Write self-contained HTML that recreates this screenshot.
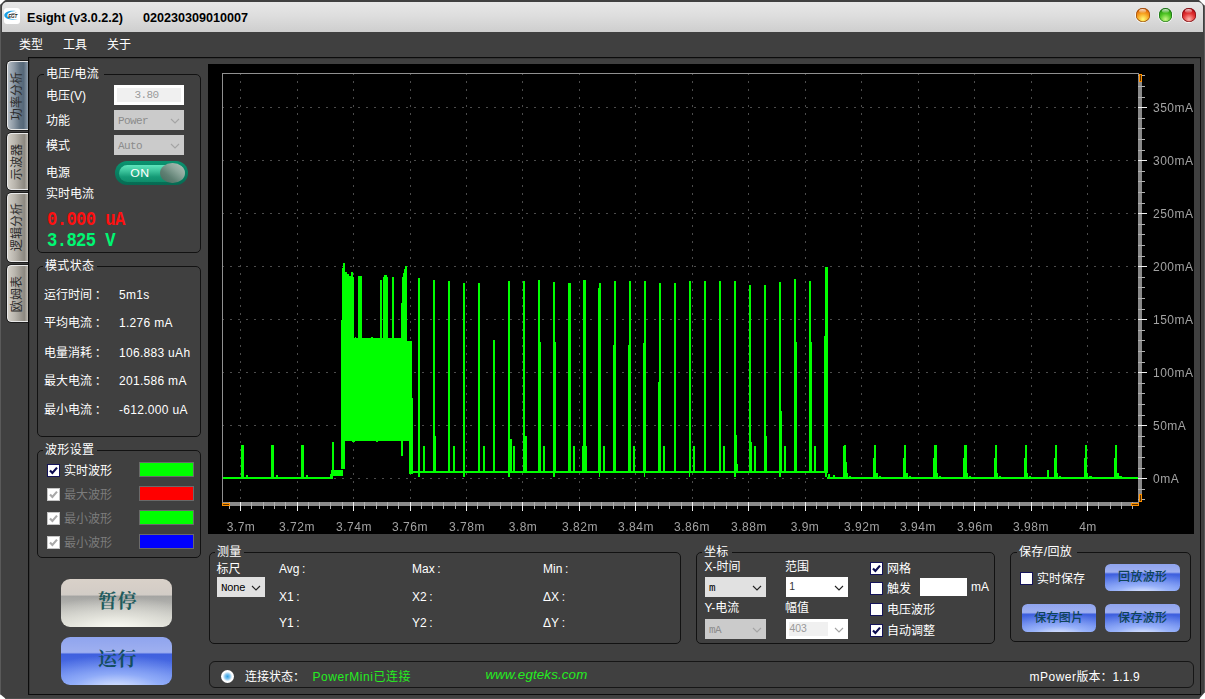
<!DOCTYPE html>
<html lang="zh"><head><meta charset="utf-8"><title>Esight</title>
<style>
html,body{margin:0;padding:0;background:#fff;}
body{width:1205px;height:699px;position:relative;overflow:hidden;font-family:"Liberation Sans","Noto Sans CJK SC",sans-serif;}
#win{position:absolute;left:0;top:0;width:1205px;height:699px;background:#404040;border-radius:6px 6px 0 0;overflow:hidden;clip-path:polygon(0 5px,5px 0,1199px 0,1205px 6px,1205px 692px,1199px 699px,6px 699px,0 694px);}
.a{position:absolute;}
.t{white-space:nowrap;}
</style></head><body><div id="win">
<div class="a " style="left:2px;top:2px;width:1201px;height:30px;background:linear-gradient(#e7e7e7,#dedede 45%,#cecece);border-radius:5px 5px 0 0;"></div>
<svg class="a" style="left:4px;top:8px" width="16" height="16" viewBox="0 0 16 16">
<rect width="16" height="16" rx="3" fill="#fff"/>
<path d="M11.8 3 C6 2 0.3 4 0.3 7.3 C0.3 10.9 7 12.7 15.2 11 C8 11.9 3.3 10.2 3.3 7.5 C3.3 4.9 7 3.3 11.8 3Z" fill="#1aa0e6"/>
<path d="M5.5 6.3 C8 5.6 10.5 5.6 12.8 4 C11.5 5.9 8.6 6.4 5.5 6.3Z" fill="#222"/>
<text x="4.2" y="10.2" font-family="Liberation Sans,sans-serif" font-size="4.6" font-weight="bold" font-style="italic" fill="#222" textLength="9">EGT</text>
</svg>
<div class="a t" style="left:27px;top:9.3px;height:18px;line-height:18px;font-size:13.2px;color:#000;font-weight:bold;transform:scaleX(0.955);transform-origin:0 50%;">Esight (v3.0.2.2)</div>
<div class="a t" style="left:143px;top:9.3px;height:18px;line-height:18px;font-size:13.2px;color:#000;font-weight:bold;transform:scaleX(0.955);transform-origin:0 50%;">020230309010007</div>
<div class="a " style="left:1135.4px;top:7.8999999999999995px;width:15.0px;height:15.0px;border-radius:50%;background:rgba(255,255,255,.75);"></div>
<div class="a " style="left:1136.2px;top:8.2px;width:13.4px;height:13.4px;border-radius:50%;background:radial-gradient(circle at 50% 80%,#fffa72 0%,#f6a020 45%,#e26c0a 72%,#8c4208 98%);box-shadow:inset 0 0 0 0.6px #8c4208;"></div>
<div class="a " style="left:1139.3000000000002px;top:9.3px;width:7.2px;height:4.2px;border-radius:50%;background:linear-gradient(rgba(255,255,255,.8),rgba(255,255,255,.08));"></div>
<div class="a " style="left:1158.3px;top:7.8999999999999995px;width:15.0px;height:15.0px;border-radius:50%;background:rgba(255,255,255,.75);"></div>
<div class="a " style="left:1159.1px;top:8.2px;width:13.4px;height:13.4px;border-radius:50%;background:radial-gradient(circle at 50% 80%,#c6f884 0%,#4cc222 45%,#2b9c12 72%,#0d5f10 98%);box-shadow:inset 0 0 0 0.6px #0d5f10;"></div>
<div class="a " style="left:1162.2px;top:9.3px;width:7.2px;height:4.2px;border-radius:50%;background:linear-gradient(rgba(255,255,255,.8),rgba(255,255,255,.08));"></div>
<div class="a " style="left:1181.4px;top:7.8999999999999995px;width:15.0px;height:15.0px;border-radius:50%;background:rgba(255,255,255,.75);"></div>
<div class="a " style="left:1182.2px;top:8.2px;width:13.4px;height:13.4px;border-radius:50%;background:radial-gradient(circle at 50% 80%,#ffb4ac 0%,#e23434 45%,#c0121a 72%,#6e0a10 98%);box-shadow:inset 0 0 0 0.6px #6e0a10;"></div>
<div class="a " style="left:1185.3000000000002px;top:9.3px;width:7.2px;height:4.2px;border-radius:50%;background:linear-gradient(rgba(255,255,255,.8),rgba(255,255,255,.08));"></div>
<div class="a " style="left:0px;top:0px;width:1px;height:699px;background:#5a5a5a;"></div>
<div class="a " style="left:1204px;top:0px;width:1px;height:699px;background:#5a5a5a;"></div>
<div class="a " style="left:0px;top:698px;width:1205px;height:1px;background:#4e4e4e;"></div>
<div class="a t" style="left:19px;top:36.5px;height:16px;line-height:16px;font-size:12px;color:#fff;">类型</div>
<div class="a t" style="left:63px;top:36.5px;height:16px;line-height:16px;font-size:12px;color:#fff;">工具</div>
<div class="a t" style="left:107px;top:36.5px;height:16px;line-height:16px;font-size:12px;color:#fff;">关于</div>
<div class="a " style="left:28px;top:57px;width:1173px;height:638px;border:1px solid #0c0c0c;box-sizing:border-box;box-shadow:inset 1px 1px 0 #353535;"></div>
<div class="a " style="left:7px;top:61px;width:21px;height:69px;background:linear-gradient(90deg,#b4bcc4 0%,#8d99a5 30%,#5f7080 60%,#566879 78%,#8c9aa8 100%);border:1px solid #e8e8e8;border-right:none;border-radius:4.5px 0 0 4.5px;box-sizing:border-box;box-shadow:-1px 0 0 #1c1c1c,0 -1px 0 #1c1c1c,0 1px 0 #1c1c1c;"></div>
<div class="a t" style="left:-23.1px;top:87.5px;width:80px;height:16px;line-height:16px;text-align:center;font-size:12px;color:#2c2c2c;transform:rotate(-90deg);letter-spacing:0.1px;">功率分析</div>
<div class="a " style="left:7px;top:133px;width:21px;height:57px;background:linear-gradient(90deg,#d2cec6 0%,#b9b5ad 35%,#9b978f 65%,#8d8981 82%,#bdb9b1 100%);border:1px solid #e8e8e8;border-right:none;border-radius:4.5px 0 0 4.5px;box-sizing:border-box;box-shadow:-1px 0 0 #1c1c1c,0 -1px 0 #1c1c1c,0 1px 0 #1c1c1c;"></div>
<div class="a t" style="left:-23.1px;top:153.5px;width:80px;height:16px;line-height:16px;text-align:center;font-size:12px;color:#2c2c2c;transform:rotate(-90deg);letter-spacing:0.1px;">示波器</div>
<div class="a " style="left:7px;top:193px;width:21px;height:68.5px;background:linear-gradient(90deg,#d2cec6 0%,#b9b5ad 35%,#9b978f 65%,#8d8981 82%,#bdb9b1 100%);border:1px solid #e8e8e8;border-right:none;border-radius:4.5px 0 0 4.5px;box-sizing:border-box;box-shadow:-1px 0 0 #1c1c1c,0 -1px 0 #1c1c1c,0 1px 0 #1c1c1c;"></div>
<div class="a t" style="left:-23.1px;top:219.25px;width:80px;height:16px;line-height:16px;text-align:center;font-size:12px;color:#2c2c2c;transform:rotate(-90deg);letter-spacing:0.1px;">逻辑分析</div>
<div class="a " style="left:7px;top:265px;width:21px;height:57px;background:linear-gradient(90deg,#d2cec6 0%,#b9b5ad 35%,#9b978f 65%,#8d8981 82%,#bdb9b1 100%);border:1px solid #e8e8e8;border-right:none;border-radius:4.5px 0 0 4.5px;box-sizing:border-box;box-shadow:-1px 0 0 #1c1c1c,0 -1px 0 #1c1c1c,0 1px 0 #1c1c1c;"></div>
<div class="a t" style="left:-23.1px;top:285.5px;width:80px;height:16px;line-height:16px;text-align:center;font-size:12px;color:#2c2c2c;transform:rotate(-90deg);letter-spacing:0.1px;">欧姆表</div>
<div class="a " style="left:37px;top:74px;width:164px;height:179px;border:1px solid #121212;border-radius:5px;box-sizing:border-box;"></div>
<div class="a " style="left:44px;top:72px;width:60px;height:5px;background:#404040;"></div>
<div class="a t" style="left:46px;top:66.4px;height:16px;line-height:16px;font-size:12px;color:#fff;letter-spacing:0.35px;">电压/电流</div>
<div class="a t" style="left:46px;top:88.3px;height:16px;line-height:16px;font-size:12px;color:#fff;">电压(V)</div>
<div class="a t" style="left:46px;top:112.8px;height:16px;line-height:16px;font-size:12px;color:#fff;">功能</div>
<div class="a t" style="left:46px;top:138.0px;height:16px;line-height:16px;font-size:12px;color:#fff;">模式</div>
<div class="a t" style="left:46px;top:165.0px;height:16px;line-height:16px;font-size:12px;color:#fff;">电源</div>
<div class="a t" style="left:46px;top:186.3px;height:16px;line-height:16px;font-size:12px;color:#fff;">实时电流</div>
<div class="a " style="left:114px;top:85px;width:70px;height:20px;background:#f0f0f0;border:3px solid #fff;box-sizing:border-box;"></div>
<div class="a t" style="left:116.5px;top:87.8px;width:60px;text-align:center;height:14px;line-height:14px;font-size:11px;color:#9a9a9a;font-family:'Liberation Mono','Noto Sans CJK SC',monospace;letter-spacing:-0.6px;">3.80</div>
<div class="a " style="left:114px;top:110px;width:70px;height:20px;background:#cbcbcb;"></div>
<div class="a t" style="left:118px;top:113.9px;height:14px;line-height:14px;font-size:11px;color:#8c8c8c;font-family:'Liberation Mono','Noto Sans CJK SC',monospace;letter-spacing:-0.6px;">Power</div>
<svg class="a" style="left:169.5px;top:117.5px" width="10" height="6" viewBox="0 0 10 6"><path d="M1 1 L5.0 5 L9 1" fill="none" stroke="#a4a4a4" stroke-width="1.1"/></svg>
<div class="a " style="left:114px;top:135px;width:70px;height:20px;background:#cbcbcb;"></div>
<div class="a t" style="left:118px;top:138.9px;height:14px;line-height:14px;font-size:11px;color:#8c8c8c;font-family:'Liberation Mono','Noto Sans CJK SC',monospace;letter-spacing:-0.6px;">Auto</div>
<svg class="a" style="left:169.5px;top:142.5px" width="10" height="6" viewBox="0 0 10 6"><path d="M1 1 L5.0 5 L9 1" fill="none" stroke="#a4a4a4" stroke-width="1.1"/></svg>
<div class="a " style="left:115px;top:161px;width:73px;height:24px;border-radius:12px;background:linear-gradient(#0a9470,#087a5e 60%,#066a52);"></div>
<div class="a " style="left:118.5px;top:164.5px;width:66.5px;height:17.5px;border-radius:9px;background:linear-gradient(#5fe4bc 0%,#3cc49c 35%,#159a76 70%,#0e8c6a 100%);"></div>
<div class="a t" style="left:119.80000000000001px;top:167.3px;width:40px;text-align:center;height:14px;line-height:14px;font-size:10.2px;color:#fff;letter-spacing:0.4px;transform:scaleX(1.2);">ON</div>
<div class="a " style="left:160.2px;top:162.7px;width:24.8px;height:20.4px;border-radius:50%;background:linear-gradient(to bottom left,#b6c6be 0%,#8ea79c 35%,#5f8073 65%,#456659 100%);"></div>
<div class="a t" style="left:46.9px;top:209.3px;height:22px;line-height:22px;font-size:19.5px;color:#ff1010;font-family:'Liberation Mono','Noto Sans CJK SC',monospace;font-weight:bold;letter-spacing:-0.68px;transform:scaleX(0.88);transform-origin:0 50%;">0.000 uA</div>
<div class="a t" style="left:46.9px;top:230.1px;height:22px;line-height:22px;font-size:19.5px;color:#00f673;font-family:'Liberation Mono','Noto Sans CJK SC',monospace;font-weight:bold;letter-spacing:-0.68px;transform:scaleX(0.88);transform-origin:0 50%;">3.825 V</div>
<div class="a " style="left:37px;top:266px;width:164px;height:171px;border:1px solid #121212;border-radius:5px;box-sizing:border-box;"></div>
<div class="a " style="left:43px;top:264px;width:54px;height:5px;background:#404040;"></div>
<div class="a t" style="left:45px;top:258.4px;height:16px;line-height:16px;font-size:12px;color:#fff;letter-spacing:0.35px;">模式状态</div>
<div class="a t" style="left:44px;top:287.0px;height:16px;line-height:16px;font-size:12px;color:#fff;">运行时间<span style="margin-left:2.7px">：</span></div>
<div class="a t" style="left:119px;top:287.0px;height:16px;line-height:16px;font-size:12px;color:#fff;letter-spacing:0.3px;">5m1s</div>
<div class="a t" style="left:44px;top:315.4px;height:16px;line-height:16px;font-size:12px;color:#fff;">平均电流<span style="margin-left:2.7px">：</span></div>
<div class="a t" style="left:119px;top:315.4px;height:16px;line-height:16px;font-size:12px;color:#fff;letter-spacing:0.3px;">1.276 mA</div>
<div class="a t" style="left:44px;top:344.5px;height:16px;line-height:16px;font-size:12px;color:#fff;">电量消耗<span style="margin-left:2.7px">：</span></div>
<div class="a t" style="left:119px;top:344.5px;height:16px;line-height:16px;font-size:12px;color:#fff;letter-spacing:0.3px;">106.883 uAh</div>
<div class="a t" style="left:44px;top:373.4px;height:16px;line-height:16px;font-size:12px;color:#fff;">最大电流<span style="margin-left:2.7px">：</span></div>
<div class="a t" style="left:119px;top:373.4px;height:16px;line-height:16px;font-size:12px;color:#fff;letter-spacing:0.3px;">201.586 mA</div>
<div class="a t" style="left:44px;top:402.0px;height:16px;line-height:16px;font-size:12px;color:#fff;">最小电流<span style="margin-left:2.7px">：</span></div>
<div class="a t" style="left:119px;top:402.0px;height:16px;line-height:16px;font-size:12px;color:#fff;letter-spacing:0.3px;">-612.000 uA</div>
<div class="a " style="left:37px;top:450px;width:164px;height:108px;border:1px solid #121212;border-radius:5px;box-sizing:border-box;"></div>
<div class="a " style="left:43px;top:448px;width:54px;height:5px;background:#404040;"></div>
<div class="a t" style="left:45px;top:442.4px;height:16px;line-height:16px;font-size:12px;color:#fff;letter-spacing:0.35px;">波形设置</div>
<div class="a " style="left:47px;top:464px;width:13px;height:13px;background:#fff;border:1px solid #14145a;box-sizing:border-box;"></div>
<svg class="a" style="left:47px;top:464px" width="13" height="13" viewBox="0 0 13 13"><path d="M3 6.4 L5.4 9 L10 3.6" fill="none" stroke="#0a0a50" stroke-width="2.15"/></svg>
<div class="a t" style="left:64px;top:462.5px;height:16px;line-height:16px;font-size:12px;color:#fff;">实时波形</div>
<div class="a " style="left:139px;top:462px;width:55px;height:15px;background:#00ff00;border:1px solid #6a6a6a;box-sizing:border-box;"></div>
<div class="a " style="left:47px;top:488px;width:13px;height:13px;background:#fff;border:1px solid #c4c4c4;box-sizing:border-box;"></div>
<svg class="a" style="left:47px;top:488px" width="13" height="13" viewBox="0 0 13 13"><path d="M3 6.4 L5.4 9 L10 3.6" fill="none" stroke="#a8a8a8" stroke-width="2.15"/></svg>
<div class="a t" style="left:64px;top:486.5px;height:16px;line-height:16px;font-size:12px;color:#7c7c7c;">最大波形</div>
<div class="a " style="left:139px;top:486px;width:55px;height:15px;background:#ff0000;border:1px solid #6a6a6a;box-sizing:border-box;"></div>
<div class="a " style="left:47px;top:512px;width:13px;height:13px;background:#fff;border:1px solid #c4c4c4;box-sizing:border-box;"></div>
<svg class="a" style="left:47px;top:512px" width="13" height="13" viewBox="0 0 13 13"><path d="M3 6.4 L5.4 9 L10 3.6" fill="none" stroke="#a8a8a8" stroke-width="2.15"/></svg>
<div class="a t" style="left:64px;top:510.5px;height:16px;line-height:16px;font-size:12px;color:#7c7c7c;">最小波形</div>
<div class="a " style="left:139px;top:510px;width:55px;height:15px;background:#00ff00;border:1px solid #6a6a6a;box-sizing:border-box;"></div>
<div class="a " style="left:47px;top:536px;width:13px;height:13px;background:#fff;border:1px solid #c4c4c4;box-sizing:border-box;"></div>
<svg class="a" style="left:47px;top:536px" width="13" height="13" viewBox="0 0 13 13"><path d="M3 6.4 L5.4 9 L10 3.6" fill="none" stroke="#a8a8a8" stroke-width="2.15"/></svg>
<div class="a t" style="left:64px;top:534.5px;height:16px;line-height:16px;font-size:12px;color:#7c7c7c;">最小波形</div>
<div class="a " style="left:139px;top:534px;width:55px;height:15px;background:#0000ff;border:1px solid #6a6a6a;box-sizing:border-box;"></div>
<div class="a " style="left:61.4px;top:579px;width:110.4px;height:48px;border-radius:9px;background:radial-gradient(ellipse 85% 68% at 50% 105%,#fbfbf4 0%,rgba(240,240,232,.6) 45%,rgba(200,200,196,0) 100%),linear-gradient(#d9d1c9 0%,#d2ccc6 33%,#a4a4a2 36%,#b4b4b0 55%,#d8d8d0 100%);"></div>
<div class="a t" style="left:17.599999999999994px;top:590.2px;width:200px;text-align:center;height:24px;line-height:24px;font-size:19px;color:#1f5c5e;font-family:'Liberation Serif','Noto Serif CJK SC',serif;font-weight:bold;letter-spacing:0.6px;">暂停</div>
<div class="a " style="left:61.4px;top:637px;width:110.4px;height:48px;border-radius:9px;background:radial-gradient(ellipse 88% 70% at 50% 108%,#dfe8ff 0%,rgba(170,195,255,.65) 45%,rgba(90,120,235,0) 100%),linear-gradient(#8fa4ee 0%,#9fb0f0 32%,#3f60de 36%,#4a6ce4 60%,#6a8af0 100%);"></div>
<div class="a t" style="left:17.599999999999994px;top:648.2px;width:200px;text-align:center;height:24px;line-height:24px;font-size:19px;color:#144e5e;font-family:'Liberation Serif','Noto Serif CJK SC',serif;font-weight:bold;letter-spacing:0.6px;">运行</div>
<div class="a " style="left:208px;top:64px;width:986px;height:470px;background:#000;"></div>
<svg class="a" style="left:0;top:0" width="1205" height="699" viewBox="0 0 1205 699"><path d="M240.5 73V502M297.5 73V502M353.5 73V502M410.5 73V502M466.5 73V502M522.5 73V502M579.5 73V502M635.5 73V502M692.5 73V502M748.5 73V502M805.5 73V502M861.5 73V502M918.5 73V502M974.5 73V502M1031.5 73V502M1087.5 73V502M222 107.5H1138M222 160.5H1138M222 213.5H1138M222 266.5H1138M222 319.5H1138M222 372.5H1138M222 425.5H1138M222 478.5H1138" stroke="#4c4c4c" stroke-width="1" stroke-dasharray="2 6" fill="none" shape-rendering="crispEdges"/><path d="M223.0 477.0h108.0v2.0h-108.0zM241.2 445.0h2.6v33.0h-2.6zM246.0 475.0h2.0v3.0h-2.0zM271.2 445.0h2.6v33.0h-2.6zM276.0 475.0h2.0v3.0h-2.0zM301.2 445.0h2.6v33.0h-2.6zM306.0 475.0h2.0v3.0h-2.0zM329.5 473.5h3.0v5.0h-3.0zM331.0 470.0h12.0v5.5h-12.0zM332.0 442.0h2.4v30.0h-2.4zM341.2 338.3h65.8v102.5h-65.8zM407.0 340.5h5.2v100.3h-5.2zM354.5 337.3h1.5v2.0h-1.5zM366.0 337.5h2.0v1.8h-2.0zM371.0 337.3h1.5v2.0h-1.5zM375.0 337.7h2.5v1.6h-2.5zM396.0 337.6h3.0v1.7h-3.0zM352.0 440.0h3.0v1.7h-3.0zM360.0 440.0h2.0v1.3h-2.0zM367.0 440.0h1.5v1.4h-1.5zM376.0 440.0h2.0v1.5h-2.0zM388.0 440.0h3.0v1.1h-3.0zM341.2 320.0h4.0v149.0h-4.0zM342.0 268.0h1.0v60.0h-1.0zM342.9 263.0h2.1v80.0h-2.1zM345.0 271.7h1.7v70.0h-1.7zM346.7 273.9h2.2v70.0h-2.2zM348.9 275.6h1.7v70.0h-1.7zM350.6 272.2h2.6v70.0h-2.6zM353.2 277.0h0.9v65.0h-0.9zM357.8 276.1h4.2v65.0h-4.2zM379.8 280.3h2.1v60.0h-2.1zM382.9 276.5h1.2v65.0h-1.2zM384.1 275.4h2.6v65.0h-2.6zM386.7 277.0h1.2v65.0h-1.2zM391.9 277.0h2.2v65.0h-2.2zM401.0 303.0h0.9v40.0h-0.9zM401.9 276.5h1.0v65.0h-1.0zM402.9 273.0h1.0v70.0h-1.0zM403.9 269.0h1.2v70.0h-1.2zM405.1 266.2h1.9v75.0h-1.9zM409.0 397.5h4.3v76.0h-4.3zM401.0 440.0h1.7v16.0h-1.7zM412.0 471.0h416.0v2.0h-416.0zM417.8 278.0h2.1v195.0h-2.1zM417.9 472.0h1.6v4.5h-1.6zM432.9 280.0h2.1v193.0h-2.1zM434.9 436.0h1.3v36.0h-1.3zM447.9 281.3h2.1v191.7h-2.1zM463.0 283.3h2.1v189.7h-2.1zM463.0 472.0h1.6v4.5h-1.6zM478.0 283.3h2.1v189.7h-2.1zM493.1 339.9h2.1v133.1h-2.1zM508.1 281.3h2.1v191.7h-2.1zM510.2 439.0h1.3v33.0h-1.3zM508.2 472.0h1.6v4.5h-1.6zM523.2 281.3h2.1v191.7h-2.1zM525.2 436.0h1.3v36.0h-1.3zM538.2 280.0h2.1v193.0h-2.1zM540.3 342.0h1.0v130.0h-1.0zM553.3 282.3h2.1v190.7h-2.1zM555.4 342.0h1.0v130.0h-1.0zM553.4 472.0h1.6v4.5h-1.6zM568.4 283.3h2.1v189.7h-2.1zM570.4 340.0h1.0v132.0h-1.0zM583.4 280.0h2.1v193.0h-2.1zM582.5 340.0h1.0v132.0h-1.0zM585.5 446.0h1.3v26.0h-1.3zM582.2 446.0h1.3v26.0h-1.3zM598.5 283.3h2.1v189.7h-2.1zM597.5 288.0h1.0v184.0h-1.0zM598.5 472.0h1.6v4.5h-1.6zM613.5 281.3h2.1v191.7h-2.1zM612.5 345.0h1.0v127.0h-1.0zM628.6 281.3h2.1v191.7h-2.1zM627.6 344.5h1.0v127.5h-1.0zM643.6 281.3h2.1v191.7h-2.1zM642.6 343.0h1.0v129.0h-1.0zM643.6 472.0h1.6v4.5h-1.6zM658.7 283.3h2.1v189.7h-2.1zM657.7 381.6h1.0v90.4h-1.0zM673.7 283.3h2.1v189.7h-2.1zM688.8 281.3h2.1v191.7h-2.1zM688.8 472.0h1.6v4.5h-1.6zM703.8 281.3h2.1v191.7h-2.1zM718.9 281.3h2.1v191.7h-2.1zM733.9 281.3h2.1v191.7h-2.1zM736.0 435.0h1.3v37.0h-1.3zM737.2 464.0h1.2v8.0h-1.2zM734.0 472.0h1.6v4.5h-1.6zM749.0 284.6h2.1v188.4h-2.1zM751.0 442.0h1.3v30.0h-1.3zM764.0 284.6h2.1v188.4h-2.1zM766.0 436.0h1.3v36.0h-1.3zM779.1 282.3h2.1v190.7h-2.1zM781.1 411.0h1.0v61.0h-1.0zM779.1 472.0h1.6v4.5h-1.6zM794.1 279.0h2.1v194.0h-2.1zM796.1 342.0h1.0v130.0h-1.0zM809.2 281.3h2.1v191.7h-2.1zM811.2 342.0h1.0v130.0h-1.0zM823.6 335.6h1.2v137.0h-1.2zM824.5 266.5h3.0v206.5h-3.0zM825.0 472.0h1.6v4.5h-1.6zM422.9 446.0h2.0v26.0h-2.0zM452.9 446.0h2.0v26.0h-2.0zM483.0 446.0h2.0v26.0h-2.0zM513.0 446.0h2.0v26.0h-2.0zM543.1 446.0h2.0v26.0h-2.0zM573.1 446.0h2.0v26.0h-2.0zM603.2 446.0h2.0v26.0h-2.0zM633.2 446.0h2.0v26.0h-2.0zM663.3 446.0h2.0v26.0h-2.0zM693.3 446.0h2.0v26.0h-2.0zM723.4 446.0h2.0v26.0h-2.0zM753.5 446.0h2.0v26.0h-2.0zM783.5 446.0h2.0v26.0h-2.0zM813.5 446.0h2.0v26.0h-2.0zM827.0 477.0h311.5v2.0h-311.5zM828.0 474.0h2.0v4.0h-2.0zM833.0 475.0h2.0v3.0h-2.0zM844.0 444.5h2.2v33.0h-2.2zM843.0 458.0h1.0v20.0h-1.0zM848.5 475.5h2.2v2.0h-2.2zM843.4 472.5h4.2v5.0h-4.2zM874.1 444.5h2.2v33.0h-2.2zM873.1 458.0h1.0v20.0h-1.0zM878.6 475.5h2.2v2.0h-2.2zM873.5 472.5h4.2v5.0h-4.2zM904.2 444.5h2.2v33.0h-2.2zM903.2 458.0h1.0v20.0h-1.0zM908.7 475.5h2.2v2.0h-2.2zM903.6 472.5h4.2v5.0h-4.2zM934.3 444.5h2.2v33.0h-2.2zM933.3 458.0h1.0v20.0h-1.0zM938.8 475.5h2.2v2.0h-2.2zM933.7 472.5h4.2v5.0h-4.2zM964.4 444.5h2.2v33.0h-2.2zM963.4 458.0h1.0v20.0h-1.0zM968.9 475.5h2.2v2.0h-2.2zM963.8 472.5h4.2v5.0h-4.2zM994.5 444.5h2.2v33.0h-2.2zM993.5 458.0h1.0v20.0h-1.0zM999.0 475.5h2.2v2.0h-2.2zM993.9 472.5h4.2v5.0h-4.2zM1024.6 444.5h2.2v33.0h-2.2zM1023.6 458.0h1.0v20.0h-1.0zM1029.1 475.5h2.2v2.0h-2.2zM1024.0 472.5h4.2v5.0h-4.2zM1054.7 444.5h2.2v33.0h-2.2zM1053.7 458.0h1.0v20.0h-1.0zM1059.2 475.5h2.2v2.0h-2.2zM1054.1 472.5h4.2v5.0h-4.2zM1084.8 444.5h2.2v33.0h-2.2zM1083.8 458.0h1.0v20.0h-1.0zM1089.3 475.5h2.2v2.0h-2.2zM1084.2 472.5h4.2v5.0h-4.2zM1114.9 444.5h2.2v33.0h-2.2zM1113.9 458.0h1.0v20.0h-1.0zM1119.4 475.5h2.2v2.0h-2.2zM1114.3 472.5h4.2v5.0h-4.2zM843.0 446.0h1.6v30.0h-1.6zM846.2 462.0h1.2v14.0h-1.2zM1046.5 470.0h2.5v8.0h-2.5z" fill="#00ff00" shape-rendering="crispEdges"/><path d="M222.5 73V502M222 73.5H1139" stroke="#909090" stroke-width="1" fill="none" shape-rendering="crispEdges"/><rect x="1138" y="74" width="4" height="428" fill="#8a8a8a" shape-rendering="crispEdges"/><rect x="222" y="502" width="917" height="4" fill="#8a8a8a" shape-rendering="crispEdges"/><path d="M229.5 502V509M251.5 502V509M263.5 502V509M274.5 502V509M285.5 502V509M308.5 502V509M319.5 502V509M330.5 502V509M342.5 502V509M364.5 502V509M376.5 502V509M387.5 502V509M398.5 502V509M421.5 502V509M432.5 502V509M443.5 502V509M455.5 502V509M477.5 502V509M489.5 502V509M500.5 502V509M511.5 502V509M534.5 502V509M545.5 502V509M556.5 502V509M568.5 502V509M590.5 502V509M601.5 502V509M613.5 502V509M624.5 502V509M647.5 502V509M658.5 502V509M669.5 502V509M681.5 502V509M703.5 502V509M714.5 502V509M726.5 502V509M737.5 502V509M760.5 502V509M771.5 502V509M782.5 502V509M793.5 502V509M816.5 502V509M827.5 502V509M839.5 502V509M850.5 502V509M873.5 502V509M884.5 502V509M895.5 502V509M906.5 502V509M929.5 502V509M940.5 502V509M952.5 502V509M963.5 502V509M985.5 502V509M997.5 502V509M1008.5 502V509M1019.5 502V509M1042.5 502V509M1053.5 502V509M1065.5 502V509M1076.5 502V509M1098.5 502V509M1110.5 502V509M1121.5 502V509M1132.5 502V509M1138 75.5H1145M1138 86.5H1145M1138 97.5H1145M1138 118.5H1145M1138 128.5H1145M1138 139.5H1145M1138 150.5H1145M1138 171.5H1145M1138 181.5H1145M1138 192.5H1145M1138 203.5H1145M1138 224.5H1145M1138 234.5H1145M1138 245.5H1145M1138 256.5H1145M1138 277.5H1145M1138 287.5H1145M1138 298.5H1145M1138 309.5H1145M1138 330.5H1145M1138 340.5H1145M1138 351.5H1145M1138 362.5H1145M1138 383.5H1145M1138 393.5H1145M1138 404.5H1145M1138 415.5H1145M1138 436.5H1145M1138 446.5H1145M1138 457.5H1145M1138 468.5H1145M1138 489.5H1145M1138 499.5H1145" stroke="#b0b0b0" stroke-width="1" fill="none" shape-rendering="crispEdges"/><path d="M240.5 502V511M297.5 502V511M353.5 502V511M410.5 502V511M466.5 502V511M522.5 502V511M579.5 502V511M635.5 502V511M692.5 502V511M748.5 502V511M805.5 502V511M861.5 502V511M918.5 502V511M974.5 502V511M1031.5 502V511M1087.5 502V511M1138 107.5H1147M1138 160.5H1147M1138 213.5H1147M1138 266.5H1147M1138 319.5H1147M1138 372.5H1147M1138 425.5H1147M1138 478.5H1147" stroke="#f0f0f0" stroke-width="1" fill="none" shape-rendering="crispEdges"/><rect x="222" y="503" width="8" height="3" fill="#ff9000" shape-rendering="crispEdges"/><rect x="223" y="504" width="6" height="1" fill="#5a3300" shape-rendering="crispEdges"/><rect x="1131" y="503" width="8" height="3" fill="#ff9000" shape-rendering="crispEdges"/><rect x="1132" y="504" width="6" height="1" fill="#5a3300" shape-rendering="crispEdges"/><rect x="1139" y="74" width="3" height="8" fill="#ff9000" shape-rendering="crispEdges"/><rect x="1140" y="75" width="1" height="6" fill="#5a3300" shape-rendering="crispEdges"/><rect x="1139" y="494" width="3" height="8" fill="#ff9000" shape-rendering="crispEdges"/><rect x="1140" y="495" width="1" height="6" fill="#5a3300" shape-rendering="crispEdges"/></svg>
<div class="a t" style="left:210.7px;top:520.0px;width:60px;text-align:center;height:14px;line-height:14px;font-size:12px;color:#a2a2a2;letter-spacing:0.5px;will-change:transform;">3.7m</div>
<div class="a t" style="left:267.16700000000003px;top:520.0px;width:60px;text-align:center;height:14px;line-height:14px;font-size:12px;color:#a2a2a2;letter-spacing:0.5px;will-change:transform;">3.72m</div>
<div class="a t" style="left:323.634px;top:520.0px;width:60px;text-align:center;height:14px;line-height:14px;font-size:12px;color:#a2a2a2;letter-spacing:0.5px;will-change:transform;">3.74m</div>
<div class="a t" style="left:380.101px;top:520.0px;width:60px;text-align:center;height:14px;line-height:14px;font-size:12px;color:#a2a2a2;letter-spacing:0.5px;will-change:transform;">3.76m</div>
<div class="a t" style="left:436.568px;top:520.0px;width:60px;text-align:center;height:14px;line-height:14px;font-size:12px;color:#a2a2a2;letter-spacing:0.5px;will-change:transform;">3.78m</div>
<div class="a t" style="left:493.03499999999997px;top:520.0px;width:60px;text-align:center;height:14px;line-height:14px;font-size:12px;color:#a2a2a2;letter-spacing:0.5px;will-change:transform;">3.8m</div>
<div class="a t" style="left:549.5020000000001px;top:520.0px;width:60px;text-align:center;height:14px;line-height:14px;font-size:12px;color:#a2a2a2;letter-spacing:0.5px;will-change:transform;">3.82m</div>
<div class="a t" style="left:605.969px;top:520.0px;width:60px;text-align:center;height:14px;line-height:14px;font-size:12px;color:#a2a2a2;letter-spacing:0.5px;will-change:transform;">3.84m</div>
<div class="a t" style="left:662.436px;top:520.0px;width:60px;text-align:center;height:14px;line-height:14px;font-size:12px;color:#a2a2a2;letter-spacing:0.5px;will-change:transform;">3.86m</div>
<div class="a t" style="left:718.903px;top:520.0px;width:60px;text-align:center;height:14px;line-height:14px;font-size:12px;color:#a2a2a2;letter-spacing:0.5px;will-change:transform;">3.88m</div>
<div class="a t" style="left:775.37px;top:520.0px;width:60px;text-align:center;height:14px;line-height:14px;font-size:12px;color:#a2a2a2;letter-spacing:0.5px;will-change:transform;">3.9m</div>
<div class="a t" style="left:831.837px;top:520.0px;width:60px;text-align:center;height:14px;line-height:14px;font-size:12px;color:#a2a2a2;letter-spacing:0.5px;will-change:transform;">3.92m</div>
<div class="a t" style="left:888.3040000000001px;top:520.0px;width:60px;text-align:center;height:14px;line-height:14px;font-size:12px;color:#a2a2a2;letter-spacing:0.5px;will-change:transform;">3.94m</div>
<div class="a t" style="left:944.7710000000001px;top:520.0px;width:60px;text-align:center;height:14px;line-height:14px;font-size:12px;color:#a2a2a2;letter-spacing:0.5px;will-change:transform;">3.96m</div>
<div class="a t" style="left:1001.2379999999998px;top:520.0px;width:60px;text-align:center;height:14px;line-height:14px;font-size:12px;color:#a2a2a2;letter-spacing:0.5px;will-change:transform;">3.98m</div>
<div class="a t" style="left:1057.705px;top:520.0px;width:60px;text-align:center;height:14px;line-height:14px;font-size:12px;color:#a2a2a2;letter-spacing:0.5px;will-change:transform;">4m</div>
<div class="a t" style="left:1153px;top:101.0px;height:14px;line-height:14px;font-size:12px;color:#a2a2a2;letter-spacing:0.5px;will-change:transform;">350mA</div>
<div class="a t" style="left:1153px;top:154.0px;height:14px;line-height:14px;font-size:12px;color:#a2a2a2;letter-spacing:0.5px;will-change:transform;">300mA</div>
<div class="a t" style="left:1153px;top:207.0px;height:14px;line-height:14px;font-size:12px;color:#a2a2a2;letter-spacing:0.5px;will-change:transform;">250mA</div>
<div class="a t" style="left:1153px;top:260.0px;height:14px;line-height:14px;font-size:12px;color:#a2a2a2;letter-spacing:0.5px;will-change:transform;">200mA</div>
<div class="a t" style="left:1153px;top:313.0px;height:14px;line-height:14px;font-size:12px;color:#a2a2a2;letter-spacing:0.5px;will-change:transform;">150mA</div>
<div class="a t" style="left:1153px;top:366.0px;height:14px;line-height:14px;font-size:12px;color:#a2a2a2;letter-spacing:0.5px;will-change:transform;">100mA</div>
<div class="a t" style="left:1153px;top:419.0px;height:14px;line-height:14px;font-size:12px;color:#a2a2a2;letter-spacing:0.5px;will-change:transform;">50mA</div>
<div class="a t" style="left:1153px;top:472.0px;height:14px;line-height:14px;font-size:12px;color:#a2a2a2;letter-spacing:0.5px;will-change:transform;">0mA</div>
<div class="a " style="left:209px;top:552px;width:472px;height:92px;border:1px solid #121212;border-radius:5px;box-sizing:border-box;"></div>
<div class="a " style="left:215px;top:550px;width:29px;height:5px;background:#404040;"></div>
<div class="a t" style="left:217px;top:544.4px;height:16px;line-height:16px;font-size:12px;color:#fff;letter-spacing:0.35px;">测量</div>
<div class="a t" style="left:216.5px;top:561.0px;height:16px;line-height:16px;font-size:12px;color:#fff;">标尺</div>
<div class="a " style="left:217px;top:577px;width:48px;height:20px;background:#e1e1e1;"></div>
<div class="a t" style="left:221px;top:580.9px;height:14px;line-height:14px;font-size:11px;color:#000;font-family:'Liberation Mono','Noto Sans CJK SC',monospace;letter-spacing:-0.6px;">None</div>
<svg class="a" style="left:251.0px;top:584.5px" width="10" height="6" viewBox="0 0 10 6"><path d="M1 1 L5.0 5 L9 1" fill="none" stroke="#222" stroke-width="1.1"/></svg>
<div class="a t" style="left:279px;top:560.8px;height:16px;line-height:16px;font-size:12px;color:#fff;">Avg<span style="margin-left:2.6px;margin-right:1px">:</span></div>
<div class="a t" style="left:279px;top:588.5px;height:16px;line-height:16px;font-size:12px;color:#fff;">X1<span style="margin-left:2.6px;margin-right:1px">:</span></div>
<div class="a t" style="left:279px;top:614.8px;height:16px;line-height:16px;font-size:12px;color:#fff;">Y1<span style="margin-left:2.6px;margin-right:1px">:</span></div>
<div class="a t" style="left:412px;top:560.8px;height:16px;line-height:16px;font-size:12px;color:#fff;">Max<span style="margin-left:2.6px;margin-right:1px">:</span></div>
<div class="a t" style="left:412px;top:588.5px;height:16px;line-height:16px;font-size:12px;color:#fff;">X2<span style="margin-left:2.6px;margin-right:1px">:</span></div>
<div class="a t" style="left:412px;top:614.8px;height:16px;line-height:16px;font-size:12px;color:#fff;">Y2<span style="margin-left:2.6px;margin-right:1px">:</span></div>
<div class="a t" style="left:543px;top:560.8px;height:16px;line-height:16px;font-size:12px;color:#fff;">Min<span style="margin-left:2.6px;margin-right:1px">:</span></div>
<div class="a t" style="left:543px;top:588.5px;height:16px;line-height:16px;font-size:12px;color:#fff;">ΔX<span style="margin-left:2.6px;margin-right:1px">:</span></div>
<div class="a t" style="left:543px;top:614.8px;height:16px;line-height:16px;font-size:12px;color:#fff;">ΔY<span style="margin-left:2.6px;margin-right:1px">:</span></div>
<div class="a " style="left:696px;top:552px;width:299px;height:92px;border:1px solid #121212;border-radius:5px;box-sizing:border-box;"></div>
<div class="a " style="left:702px;top:550px;width:30px;height:5px;background:#404040;"></div>
<div class="a t" style="left:704px;top:544.4px;height:16px;line-height:16px;font-size:12px;color:#fff;letter-spacing:0.35px;">坐标</div>
<div class="a t" style="left:704.4px;top:559.0px;height:16px;line-height:16px;font-size:12px;color:#fff;">X-时间</div>
<div class="a t" style="left:785px;top:559.0px;height:16px;line-height:16px;font-size:12px;color:#fff;">范围</div>
<div class="a t" style="left:704.4px;top:600.0px;height:16px;line-height:16px;font-size:12px;color:#fff;">Y-电流</div>
<div class="a t" style="left:785px;top:600.0px;height:16px;line-height:16px;font-size:12px;color:#fff;">幅值</div>
<div class="a " style="left:705px;top:577px;width:61px;height:20px;background:#e1e1e1;"></div>
<div class="a t" style="left:709px;top:580.9px;height:14px;line-height:14px;font-size:11px;color:#000;font-family:'Liberation Mono','Noto Sans CJK SC',monospace;letter-spacing:-0.6px;">m</div>
<svg class="a" style="left:751.5px;top:584.5px" width="10" height="6" viewBox="0 0 10 6"><path d="M1 1 L5.0 5 L9 1" fill="none" stroke="#222" stroke-width="1.1"/></svg>
<div class="a " style="left:786px;top:577px;width:62px;height:20px;background:#fff;"></div>
<div class="a t" style="left:789.3px;top:579.5px;height:14px;line-height:14px;font-size:10.4px;color:#333;">1</div>
<svg class="a" style="left:833.5px;top:584.5px" width="10" height="6" viewBox="0 0 10 6"><path d="M1 1 L5.0 5 L9 1" fill="none" stroke="#222" stroke-width="1.1"/></svg>
<div class="a " style="left:705px;top:619px;width:61px;height:20px;background:#cbcbcb;"></div>
<div class="a t" style="left:709px;top:622.9px;height:14px;line-height:14px;font-size:11px;color:#8c8c8c;font-family:'Liberation Mono','Noto Sans CJK SC',monospace;letter-spacing:-0.6px;">mA</div>
<svg class="a" style="left:751.5px;top:626.5px" width="10" height="6" viewBox="0 0 10 6"><path d="M1 1 L5.0 5 L9 1" fill="none" stroke="#a4a4a4" stroke-width="1.1"/></svg>
<div class="a " style="left:786px;top:619px;width:62px;height:20px;background:#fff;"></div>
<div class="a " style="left:789px;top:622px;width:39px;height:14px;background:#f0f0f0;"></div>
<div class="a t" style="left:789.5px;top:621.5px;height:14px;line-height:14px;font-size:10.4px;color:#9a9a9a;">403</div>
<svg class="a" style="left:833.5px;top:626.5px" width="10" height="6" viewBox="0 0 10 6"><path d="M1 1 L5.0 5 L9 1" fill="none" stroke="#a4a4a4" stroke-width="1.1"/></svg>
<div class="a " style="left:870px;top:562px;width:13px;height:13px;background:#fff;border:1px solid #14145a;box-sizing:border-box;"></div>
<svg class="a" style="left:870px;top:562px" width="13" height="13" viewBox="0 0 13 13"><path d="M3 6.4 L5.4 9 L10 3.6" fill="none" stroke="#0a0a50" stroke-width="2.15"/></svg>
<div class="a t" style="left:887px;top:560.5px;height:16px;line-height:16px;font-size:12px;color:#fff;">网格</div>
<div class="a " style="left:870px;top:582px;width:13px;height:13px;background:#fff;border:1px solid #14145a;box-sizing:border-box;"></div>
<div class="a t" style="left:887px;top:580.5px;height:16px;line-height:16px;font-size:12px;color:#fff;">触发</div>
<div class="a " style="left:870px;top:603px;width:13px;height:13px;background:#fff;border:1px solid #14145a;box-sizing:border-box;"></div>
<div class="a t" style="left:887px;top:601.5px;height:16px;line-height:16px;font-size:12px;color:#fff;">电压波形</div>
<div class="a " style="left:870px;top:624px;width:13px;height:13px;background:#fff;border:1px solid #14145a;box-sizing:border-box;"></div>
<svg class="a" style="left:870px;top:624px" width="13" height="13" viewBox="0 0 13 13"><path d="M3 6.4 L5.4 9 L10 3.6" fill="none" stroke="#0a0a50" stroke-width="2.15"/></svg>
<div class="a t" style="left:887px;top:622.5px;height:16px;line-height:16px;font-size:12px;color:#fff;">自动调整</div>
<div class="a " style="left:920px;top:577.5px;width:47px;height:18.4px;background:#fff;"></div>
<div class="a t" style="left:971px;top:579.0px;height:16px;line-height:16px;font-size:12px;color:#fff;">mA</div>
<div class="a " style="left:1010px;top:552px;width:181px;height:90px;border:1px solid #121212;border-radius:5px;box-sizing:border-box;"></div>
<div class="a " style="left:1017px;top:550px;width:60px;height:5px;background:#404040;"></div>
<div class="a t" style="left:1019px;top:544.4px;height:16px;line-height:16px;font-size:12px;color:#fff;letter-spacing:0.35px;">保存/回放</div>
<div class="a " style="left:1020px;top:572px;width:13px;height:13px;background:#fff;border:1px solid #14145a;box-sizing:border-box;"></div>
<div class="a t" style="left:1037px;top:570.5px;height:16px;line-height:16px;font-size:12px;color:#fff;">实时保存</div>
<div class="a " style="left:1105.3px;top:563.6px;width:74.4px;height:27px;border-radius:5.5px;background:radial-gradient(ellipse 92% 78% at 50% 110%,#e8efff 0%,rgba(175,198,255,.7) 40%,rgba(90,120,235,0) 100%),linear-gradient(#8fa4ee 0%,#9fb0f0 30%,#3f60de 37%,#4a6ce4 60%,#6a8af0 100%);"></div>
<div class="a t" style="left:1105.5px;top:569.8000000000001px;width:74.4px;text-align:center;height:14px;line-height:14px;font-size:12px;color:#0e4456;letter-spacing:0.3px;font-weight:500;">回放波形</div>
<div class="a " style="left:1021.5px;top:604.2px;width:74.3px;height:27.8px;border-radius:5.5px;background:radial-gradient(ellipse 92% 78% at 50% 110%,#e8efff 0%,rgba(175,198,255,.7) 40%,rgba(90,120,235,0) 100%),linear-gradient(#8fa4ee 0%,#9fb0f0 30%,#3f60de 37%,#4a6ce4 60%,#6a8af0 100%);"></div>
<div class="a t" style="left:1021.7000000000002px;top:610.8000000000001px;width:74.3px;text-align:center;height:14px;line-height:14px;font-size:12px;color:#0e4456;letter-spacing:0.3px;font-weight:500;">保存图片</div>
<div class="a " style="left:1105.3px;top:604.2px;width:74.4px;height:27.8px;border-radius:5.5px;background:radial-gradient(ellipse 92% 78% at 50% 110%,#e8efff 0%,rgba(175,198,255,.7) 40%,rgba(90,120,235,0) 100%),linear-gradient(#8fa4ee 0%,#9fb0f0 30%,#3f60de 37%,#4a6ce4 60%,#6a8af0 100%);"></div>
<div class="a t" style="left:1105.5px;top:610.8000000000001px;width:74.4px;text-align:center;height:14px;line-height:14px;font-size:12px;color:#0e4456;letter-spacing:0.3px;font-weight:500;">保存波形</div>
<div class="a " style="left:209px;top:661px;width:985px;height:27px;border:1px solid #161616;border-radius:6px;box-sizing:border-box;"></div>
<div class="a " style="left:220.7px;top:669.6px;width:13.4px;height:13.4px;border-radius:50%;background:radial-gradient(circle,#2f9fe2 0%,#86c6f0 28%,#ffffff 52%,#ffffff 74%,#3a9cdc 92%,rgba(58,156,220,0) 100%);"></div>
<div class="a t" style="left:245px;top:668.5px;height:16px;line-height:16px;font-size:12px;color:#fff;">连接状态：</div>
<div class="a t" style="left:312.5px;top:668.5px;height:16px;line-height:16px;font-size:12px;color:#25ee20;letter-spacing:0.55px;">PowerMini已连接</div>
<div class="a t" style="left:485.5px;top:666.6px;height:16px;line-height:16px;font-size:13.3px;color:#25ee20;font-style:italic;letter-spacing:0.15px;">www.egteks.com</div>
<div class="a t" style="left:1029.5px;top:668.8px;height:16px;line-height:16px;font-size:12px;color:#fff;"><span style="letter-spacing:0.5px">mPower</span>版本：<span style="letter-spacing:0.1px">1.1.9</span></div>
</div></body></html>
